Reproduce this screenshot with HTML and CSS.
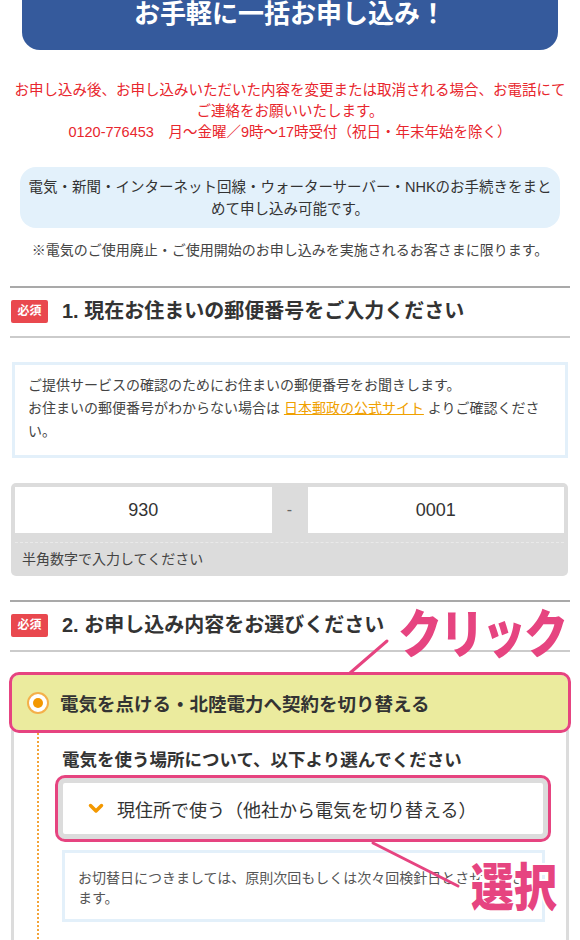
FILE: index.html
```html
<!DOCTYPE html>
<html lang="ja">
<head>
    <meta charset="UTF-8">
    <meta name="viewport" content="width=device-width, initial-scale=1.0">
    <title>お申し込みフォーム</title>
    <link rel="stylesheet" href="styles.css">
</head>
<body>
    <div class="banner">お手軽に一括お申し込み！</div>

    <p class="notice">お申し込み後、お申し込みいただいた内容を変更または取消される場合、お電話にてご連絡をお願いいたします。<br>0120-776453　月～金曜／9時～17時受付（祝日・年末年始を除く）</p>

    <div class="bubble">電気・新聞・インターネット回線・ウォーターサーバー・NHKのお手続きをまとめて申し込み可能です。</div>

    <p class="note">※電気のご使用廃止・ご使用開始のお申し込みを実施されるお客さまに限ります。</p>

    <!-- step 1 -->
    <section class="step">
        <h2 class="step-title"><span class="badge">必須</span>1. 現在お住まいの郵便番号をご入力ください</h2>

        <div class="info">ご提供サービスの確認のためにお住まいの郵便番号をお聞きします。<br>お住まいの郵便番号がわからない場合は <a href="#">日本郵政の公式サイト</a> よりご確認ください。</div>

        <div class="zip">
            <div class="zip-row">
                <input class="zip-input" type="text" value="930">
                <span class="zip-dash">-</span>
                <input class="zip-input" type="text" value="0001">
            </div>
            <p class="zip-hint">半角数字で入力してください</p>
        </div>
    </section>

    <!-- step 2 -->
    <section class="step step-plan">
        <h2 class="step-title"><span class="badge">必須</span>2. お申し込み内容をお選びください</h2>

        <div class="plan">
            <label class="choice"><span class="radio"></span>電気を点ける・北陸電力へ契約を切り替える</label>
            <div class="plan-body">
                <div class="plan-inner">
                    <p class="plan-q">電気を使う場所について、以下より選んでください</p>
                    <div class="select">
                        <svg class="chevron" width="16" height="11" viewBox="0 0 16 11"><polyline points="2.5,2.5 8,8 13.5,2.5" fill="none" stroke="#f39800" stroke-width="3.5" stroke-linecap="round" stroke-linejoin="round"/></svg>
                        現住所で使う（他社から電気を切り替える）
                    </div>
                    <div class="info info-sm">お切替日につきましては、原則次回もしくは次々回検針日とさせて頂きます。</div>
                </div>
            </div>
        </div>

        <!-- annotations -->
        <svg class="marks" width="580" height="340" viewBox="0 0 580 340">
            <line x1="350" y1="73" x2="387" y2="41" stroke="#e64480" stroke-width="3" stroke-linecap="round"/>
            <line x1="373" y1="243" x2="458" y2="286" stroke="#e64480" stroke-width="3" stroke-linecap="round"/>
        </svg>
        <span class="mark mark-click">クリック</span>
        <span class="mark mark-select">選択</span>
    </section>
</body>
</html>
```

FILE: styles.css
```css
* {
    margin: 0;
    padding: 0;
    box-sizing: border-box;
}

body {
    font-family: "Liberation Sans", "Noto Sans CJK JP", sans-serif;
    color: #333;
    background: #fff;
}

.banner {
    margin: -22px 22px 0;
    padding: 18px 0;
    line-height: 36px;
    background: #355a9c;
    color: #fff;
    font-size: 26px;
    font-weight: bold;
    text-align: center;
    border-radius: 0 0 18px 18px;
}

.notice {
    margin: 30px 8px 0;
    font-size: 14.5px;
    line-height: 21px;
    color: #e8262d;
    text-align: center;
}

.bubble {
    margin: 24px 20px 0;
    padding: 9px 6px 8px;
    background: #e3f1fb;
    border-radius: 16px;
    font-size: 14.5px;
    line-height: 22px;
    text-align: center;
}

.note {
    margin-top: 11px;
    font-size: 14px;
    line-height: 22px;
    text-align: center;
    color: #444;
}

/* steps */
.step {
    margin-top: 25px;
}

.step-title {
    margin: 0 10px;
    padding: 12px 0 13px;
    border-top: 2px solid #a9a9a9;
    border-bottom: 2px solid #cbcbcb;
    display: flex;
    align-items: center;
    gap: 14px;
    font-size: 20px;
    line-height: 23px;
    font-weight: bold;
    color: #333;
}

.badge {
    margin-left: 1px;
    width: 37px;
    height: 23px;
    display: flex;
    align-items: center;
    justify-content: center;
    background: #e9484e;
    color: #fff;
    font-size: 12px;
    font-weight: bold;
    border-radius: 2px;
}

.info {
    margin: 24px 12px 0;
    padding: 9px 19px 12px 13px;
    border: 3px solid #e3f0fa;
    font-size: 14px;
    line-height: 23px;
    color: #444;
}

.info a {
    color: #f0a000;
}

.zip {
    margin: 25px 12px 0 11px;
    padding: 4px;
    background: #dcdcdc;
    border-radius: 5px;
}

.zip-row {
    display: flex;
}

.zip-input {
    flex: 1;
    min-width: 0;
    height: 46px;
    border: 0;
    background: #fff;
    font-family: "Liberation Sans", sans-serif;
    font-size: 18px;
    color: #333;
    text-align: center;
}

.zip-dash {
    width: 36px;
    display: flex;
    align-items: center;
    justify-content: center;
    color: #666;
    font-size: 16px;
}

.zip-hint {
    margin-top: 9px;
    padding: 5px 7px 2px;
    border-top: 1px dashed #e9e9e9;
    font-size: 14px;
    line-height: 22px;
    color: #444;
}

/* step 2 */
.step-plan {
    position: relative;
    margin-top: 24px;
}

.plan {
    margin-top: 23px;
}

.choice {
    margin: 0 12px;
    height: 55px;
    display: flex;
    align-items: center;
    gap: 11px;
    padding-left: 15px;
    background: #ebeb9e;
    border-radius: 7px;
    outline: 3px solid #e64480;
    font-size: 18.5px;
    font-weight: bold;
    color: #333;
}

.radio {
    width: 22px;
    height: 22px;
    border-radius: 50%;
    border: 2px solid #f4b04a;
    background: #fff;
    display: flex;
    align-items: center;
    justify-content: center;
}

.radio::after {
    content: "";
    width: 10px;
    height: 10px;
    border-radius: 50%;
    background: #f39800;
}

.plan-body {
    margin: 0 11px;
    border: solid #dcdcdc;
    border-width: 0 3px;
    padding-left: 23px;
}

.plan-inner {
    border-left: 2px dotted #f3a43a;
    padding: 18px 18px 40px 19px;
}

.plan-q {
    padding-left: 4px;
    font-size: 17.5px;
    line-height: 24px;
    font-weight: bold;
}

.select {
    margin-top: 6px;
    height: 61px;
    display: flex;
    align-items: center;
    gap: 13px;
    padding-left: 25px;
    border: 5px solid #dcdcdc;
    border-radius: 7px;
    background: #fff;
    outline: 3px solid #e64480;
    font-size: 18px;
    color: #333;
}

.info-sm {
    margin: 11px 3px 0 4px;
    padding: 15px 10px 11px 13px;
    line-height: 20px;
    color: #555;
}

/* pink annotations on top */
.marks {
    position: absolute;
    left: 0;
    top: 0;
    pointer-events: none;
}

.mark {
    position: absolute;
    color: #e64480;
    font-weight: 900;
    line-height: 1;
    white-space: nowrap;
    transform-origin: left top;
}

.mark-click {
    left: 398px;
    top: 9px;
    font-size: 44px;
    letter-spacing: -2px;
    transform: scaleY(1.2);
}

.mark-select {
    left: 471px;
    top: 263px;
    font-size: 43px;
    transform: scaleY(1.2);
    text-shadow: 2px 0 #fff, -2px 0 #fff, 0 2px #fff, 0 -2px #fff;
}
```
